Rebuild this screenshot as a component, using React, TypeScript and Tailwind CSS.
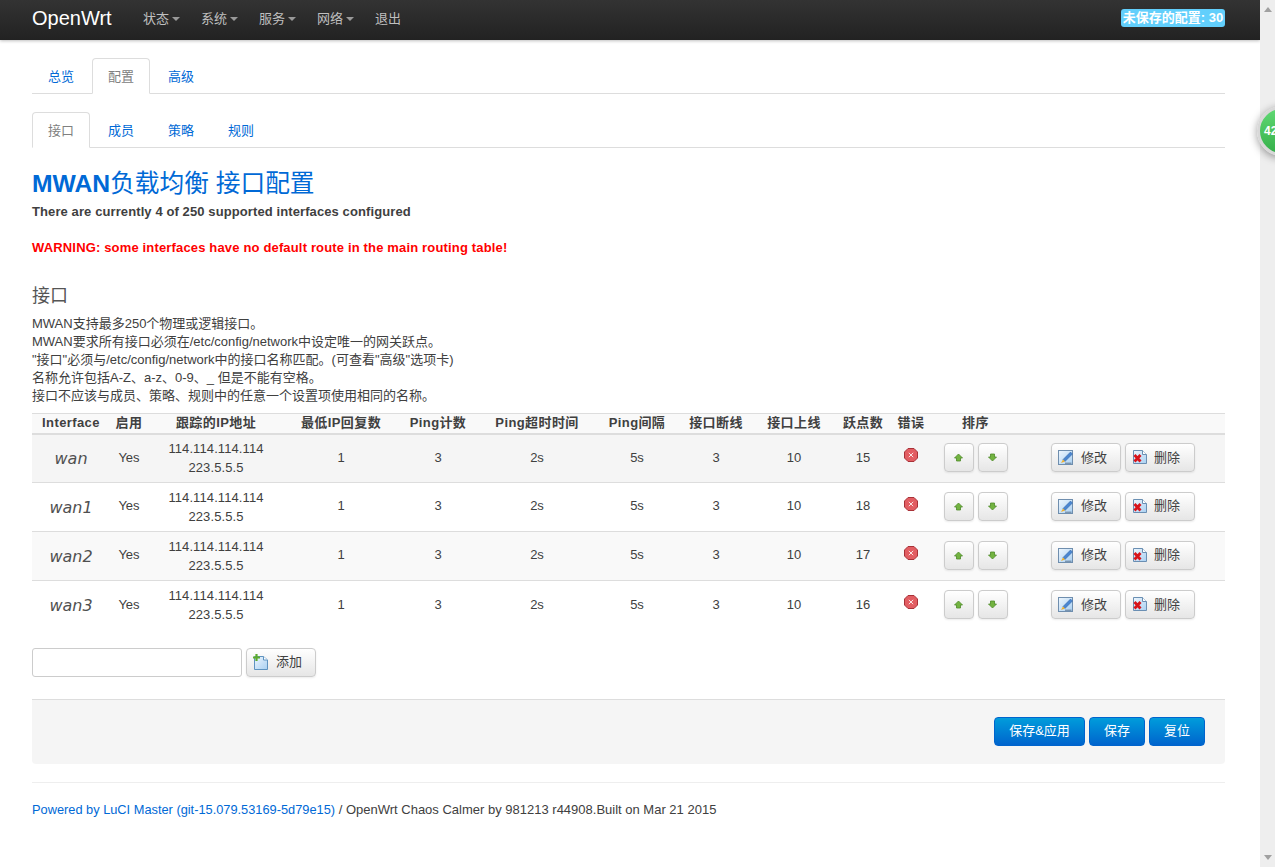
import React from "react";

const rows = [
  { name: "wan", hops: "15", bg: "bg-[#f5f5f5]" },
  { name: "wan1", hops: "18", bg: "bg-white" },
  { name: "wan2", hops: "17", bg: "bg-[#f9f9f9]" },
  { name: "wan3", hops: "16", bg: "bg-white" },
];

const headers = ["Interface", "启用", "跟踪的IP地址", "最低IP回复数", "Ping计数", "Ping超时时间", "Ping间隔", "接口断线", "接口上线", "跃点数", "错误", "排序", ""];
const widths = [78, 38, 136, 114, 80, 118, 82, 76, 80, 58, 38, 91, 204];

function Caret() {
  return <span className="ml-[3px] inline-block w-0 h-0 border-x-[4px] border-x-transparent border-t-[4px] border-t-[#999] align-middle" />;
}

function Page({ children }: { children: React.ReactNode }) {
  return (
    <svg width="16" height="16" viewBox="0 0 16 16" className="shrink-0">
      <defs>
        <linearGradient id="pg" x1="0" y1="0" x2="1" y2="1">
          <stop offset="0" stopColor="#eef6fd" />
          <stop offset="1" stopColor="#a9d0f2" />
        </linearGradient>
      </defs>
      {children}
    </svg>
  );
}

function EditIcon() {
  return (
    <Page>
      <rect x="0.5" y="1.5" width="14" height="14" fill="url(#pg)" stroke="#6f8eae" />
      <path d="M5 10.5 L12.5 3 L14.5 5 L7 12.5 Z" fill="#4a86d0" stroke="#2f5f9f" strokeWidth="0.5" />
      <path d="M3 14 L5 10.5 L7 12.5 Z" fill="#f0b12e" />
      <path d="M7 14.2 H13.5" stroke="#4a6078" strokeWidth="0.8" />
    </Page>
  );
}

function DeleteIcon() {
  return (
    <Page>
      <path d="M1.5 1.5 H10.5 L14.5 5.5 V14.5 H1.5 Z" fill="url(#pg)" stroke="#6a8fb3" />
      <path d="M10.5 1.5 V5.5 H14.5" fill="#fff" stroke="#6a8fb3" />
      <path d="M2.5 6 L8.5 12.5 M8.5 6 L2.5 12.5" stroke="#d8141a" strokeWidth="2.8" />
    </Page>
  );
}

function AddIcon() {
  return (
    <Page>
      <path d="M1.5 2.5 H10.5 L14.5 6 V15.5 H1.5 Z" fill="url(#pg)" stroke="#5f93c0" />
      <path d="M10.5 2.5 V6 H14.5" fill="#fff" stroke="#5f93c0" />
      <path d="M3.5 0 V7 M0 3.5 H7" stroke="#5cab2e" strokeWidth="2.2" />
    </Page>
  );
}

function ErrorIcon() {
  return (
    <svg width="14" height="14" viewBox="0 0 14 14">
      <path d="M4 .5 H10 L13.5 4 V10 L10 13.5 H4 L.5 10 V4 Z" fill="#e25d62" stroke="#a83238" />
      <path d="M4.8 4.8 L9.2 9.2 M9.2 4.8 L4.8 9.2" stroke="#fbe4e4" strokeWidth="1" />
    </svg>
  );
}

function Arrow({ down }: { down?: boolean }) {
  return (
    <svg width="9" height="9" viewBox="0 0 9 9">
      <path
        d={down ? "M2.5 1 H6.5 V4 H8.5 L4.5 8 L.5 4 H2.5 Z" : "M4.5 1 L8.5 5 H6.5 V8 H2.5 V5 H.5 Z"}
        fill="#72b340"
        stroke="#4e8a2a"
        strokeWidth="0.8"
      />
    </svg>
  );
}

const btn = "rounded-[4px] border border-[#ccc] bg-gradient-to-b from-white to-[#e6e6e6] shadow-[0_1px_2px_rgba(0,0,0,0.08)] text-[13px] text-[#404040] h-[29px] flex items-center";
const cell = "p-0 pb-[2px] text-center";

function Tabs({ items, active, className }: { items: string[]; active: number; className: string }) {
  return (
    <div className={`flex h-[36px] border-b border-[#ddd] ${className}`}>
      {items.map((t, i) => (
        <div
          key={t}
          className={
            i === active
              ? "w-[58px] h-[36px] mr-[2px] pt-[2px] flex items-center justify-center text-[13px] text-[#808080] bg-white border border-[#ddd] border-b-white rounded-t-[4px]"
              : "w-[58px] h-[36px] mr-[2px] pt-[2px] flex items-center justify-center text-[13px] text-[#0069d6]"
          }
        >
          {t}
        </div>
      ))}
    </div>
  );
}

export default function App() {
  return (
    <div className="relative flex h-screen overflow-hidden bg-white text-[13px] text-[#404040] font-['Liberation_Sans','Noto_Sans_CJK_SC',sans-serif]">
      <div className="w-[1260px] shrink-0">
        <nav className="h-[40px] flex items-center pl-[32px] pr-[35px] pb-[4px] bg-gradient-to-b from-[#333] to-[#222] shadow-[0_1px_3px_rgba(0,0,0,0.25)]">
          <span className="text-[20px] text-white w-[111px]">OpenWrt</span>
          {["状态", "系统", "服务", "网络"].map((t) => (
            <span key={t} className="w-[58px] mt-[2px] text-[13px] text-[#bfbfbf] flex items-center">
              {t}
              <Caret />
            </span>
          ))}
          <span className="mt-[2px] text-[13px] text-[#bfbfbf]">退出</span>
          <span className="ml-auto h-[18px] w-[104px] rounded-[3px] bg-[#62cffc] text-white font-bold text-[13px] flex items-center justify-center whitespace-nowrap">
            未保存的配置: 30
          </span>
        </nav>

        <div className="pl-[32px] pr-[35px]">
          <Tabs items={["总览", "配置", "高级"]} active={1} className="mt-[18px]" />
          <Tabs items={["接口", "成员", "策略", "规则"]} active={0} className="mt-[18px]" />

          <h2 className="mt-[21px] text-[24.7px] leading-[30px] text-[#0069d6] whitespace-nowrap">
            <span className="font-bold">MWAN</span>负载均衡 接口配置
          </h2>
          <p className="mt-[4px] font-bold leading-[18px] tracking-[0.1px]">There are currently 4 of 250 supported interfaces configured</p>
          <p className="mt-[18px] font-bold leading-[18px] tracking-[0.16px] text-[#ff0000]">
            WARNING: some interfaces have no default route in the main routing table!
          </p>
          <h3 className="mt-[27px] text-[18px] leading-[24px] font-normal text-[#555]">接口</h3>
          <div className="mt-[7px] leading-[18px]">
            <div>MWAN支持最多250个物理或逻辑接口。</div>
            <div>MWAN要求所有接口必须在/etc/config/network中设定唯一的网关跃点。</div>
            <div>"接口"必须与/etc/config/network中的接口名称匹配。(可查看"高级"选项卡)</div>
            <div>名称允许包括A-Z、a-z、0-9、_ 但是不能有空格。</div>
            <div>接口不应该与成员、策略、规则中的任意一个设置项使用相同的名称。</div>
          </div>

          <table className="mt-[8px] w-[1193px] table-fixed border-collapse">
            <colgroup>
              {widths.map((w, i) => (
                <col key={i} style={{ width: w }} />
              ))}
            </colgroup>
            <thead>
              <tr className="bg-[#f9f9f9] border-t border-b-2 border-[#ddd] h-[20px]">
                {headers.map((h, i) => (
                  <th key={i} className="p-0 text-center font-bold text-[13px] leading-[18px] tracking-[0.4px] whitespace-nowrap">
                    {h}
                  </th>
                ))}
              </tr>
            </thead>
            <tbody>
              {rows.map((r, i) => (
                <tr key={r.name} className={`${r.bg} h-[49px] ${i < 3 ? "border-b border-[#ddd]" : ""}`}>
                  <td className="p-0 pt-[1px] text-center text-[16px] italic text-[#505050] font-['DejaVu_Sans',sans-serif]">{r.name}</td>
                  <td className={cell}>Yes</td>
                  <td className="p-0 text-center leading-[19px] tracking-[0.1px]">
                    114.114.114.114
                    <br />
                    223.5.5.5
                  </td>
                  <td className={cell}>1</td>
                  <td className={cell}>3</td>
                  <td className={cell}>2s</td>
                  <td className={cell}>5s</td>
                  <td className={cell}>3</td>
                  <td className={cell}>10</td>
                  <td className={cell}>{r.hops}</td>
                  <td className="p-0">
                    <div className="flex justify-center -mt-[7px]">
                      <ErrorIcon />
                    </div>
                  </td>
                  <td className={cell}>
                    <div className="flex justify-center gap-[4px]">
                      <div className={`${btn} w-[30px] justify-center`}>
                        <Arrow />
                      </div>
                      <div className={`${btn} w-[30px] justify-center`}>
                        <Arrow down />
                      </div>
                    </div>
                  </td>
                  <td className="p-0 pb-[2px]">
                    <div className="flex gap-[4px] pl-[30px]">
                      <div className={`${btn} w-[70px] pl-[6px] gap-[7px]`}>
                        <EditIcon />
                        修改
                      </div>
                      <div className={`${btn} w-[70px] pl-[6px] gap-[6px]`}>
                        <DeleteIcon />
                        删除
                      </div>
                    </div>
                  </td>
                </tr>
              ))}
            </tbody>
          </table>

          <div className="mt-[18px] flex gap-[4px]">
            <input className="w-[210px] h-[29px] rounded-[3px] border border-[#ccc] bg-white" />
            <div className={`${btn} w-[70px] pl-[6px] gap-[7px]`}>
              <AddIcon />
              添加
            </div>
          </div>

          <div className="mt-[22px] h-[65px] border-t border-[#ddd] bg-[#f5f5f5] rounded-b-[4px] flex items-start justify-end gap-[4px] pt-[17px] pr-[20px]">
            {[
              ["保存&应用", "w-[91px]"],
              ["保存", "w-[56px]"],
              ["复位", "w-[56px]"],
            ].map(([t, w]) => (
              <div
                key={t}
                className={`${w} h-[29px] rounded-[4px] border border-[#0064cd] bg-gradient-to-b from-[#049cdb] to-[#0064cd] text-white text-[13px] flex items-center justify-center`}
              >
                {t}
              </div>
            ))}
          </div>

          <div className="mt-[18px] border-t border-[#eee] pt-[18px] text-[13px] leading-[18px] whitespace-nowrap">
            <span className="text-[#0069d6] text-[12.8px]">Powered by LuCI Master (git-15.079.53169-5d79e15)</span> / OpenWrt Chaos Calmer by 981213 r44908.Built on Mar 21 2015
          </div>
        </div>
      </div>

      <div className="w-[15px] shrink-0 bg-[#eeeeee] flex flex-col justify-between items-center py-[7px]">
        <span className="w-0 h-0 border-x-[4px] border-x-transparent border-b-[5px] border-b-[#a0a0a0]" />
        <span className="w-0 h-0 border-x-[4px] border-x-transparent border-t-[5px] border-t-[#a0a0a0]" />
      </div>

      <div className="absolute left-[1257px] top-[106px] w-[50px] h-[50px] rounded-full border-[3px] border-[#d8d8d8] bg-gradient-to-b from-[#5fd873] to-[#35b04a] shadow-[0_2px_8px_rgba(0,0,0,0.4)] flex items-center pl-[4px] text-white font-bold text-[12px]">
        42
      </div>
    </div>
  );
}
